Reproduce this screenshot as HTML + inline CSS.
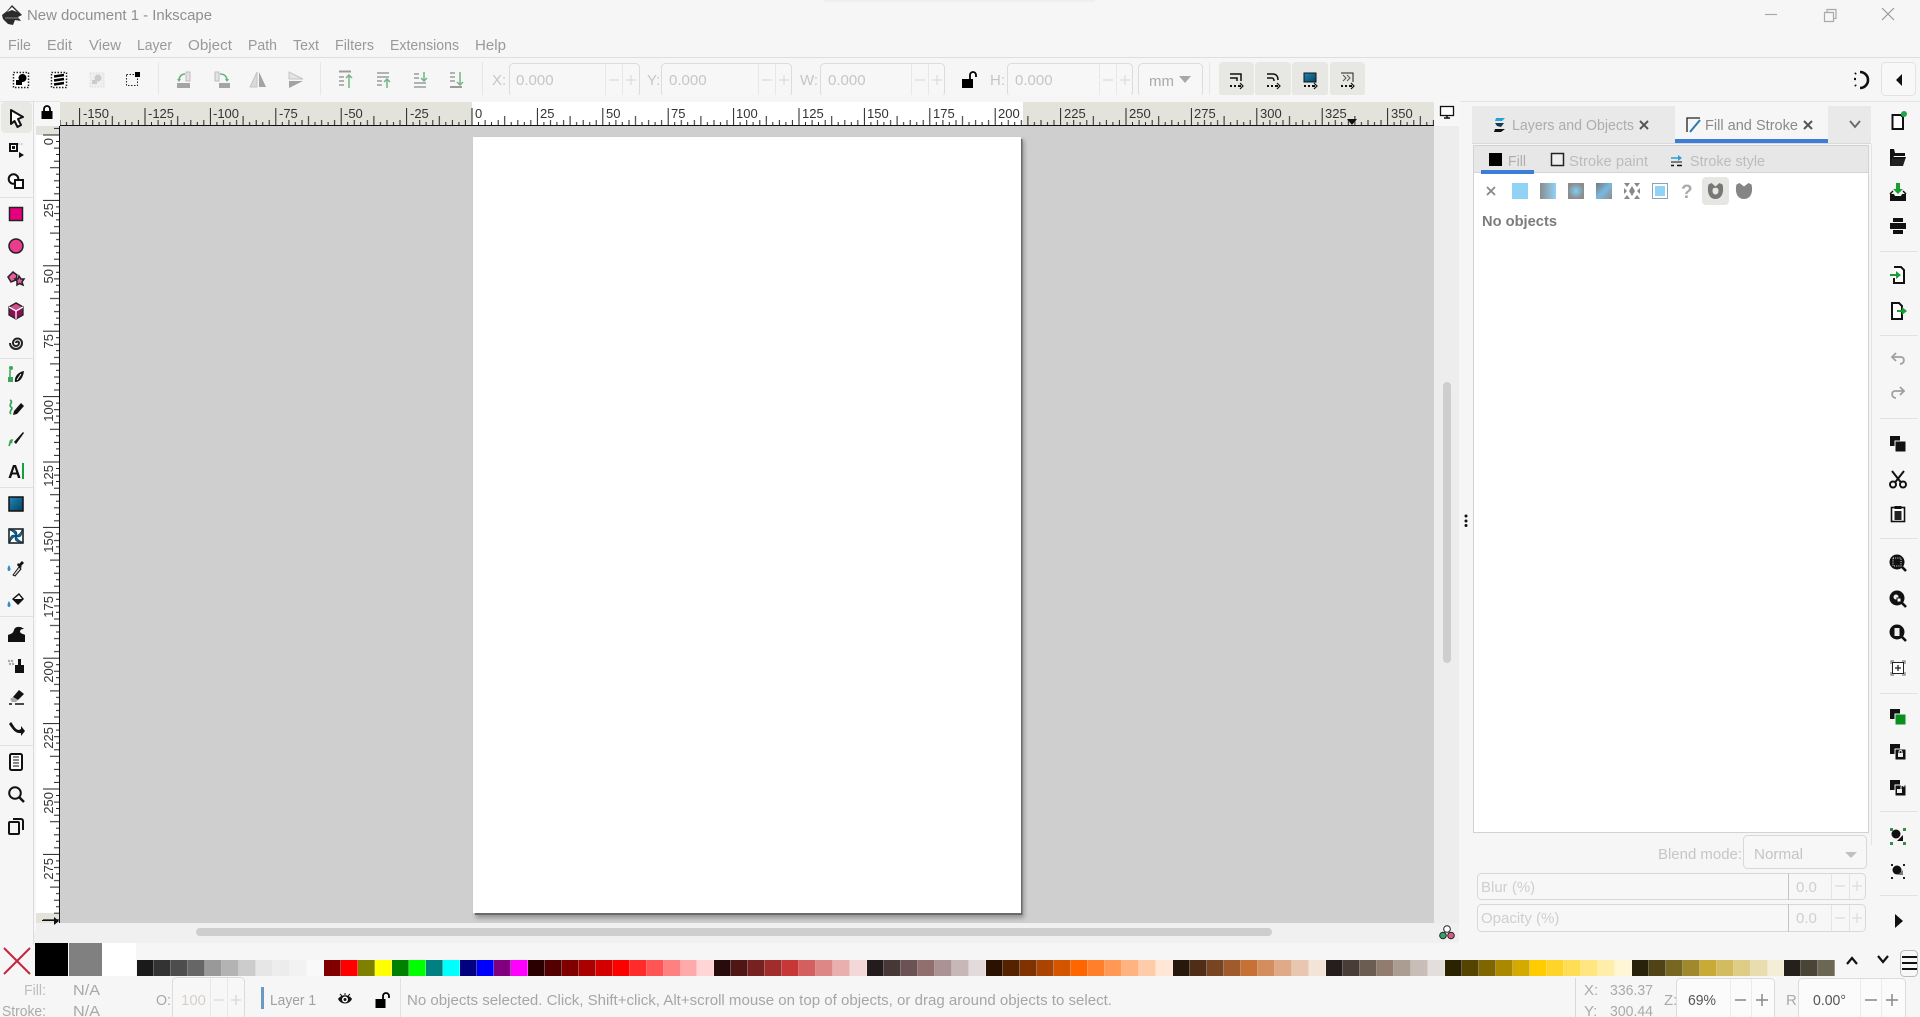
<!DOCTYPE html>
<html><head><meta charset="utf-8"><title>New document 1 - Inkscape</title>
<style>
html,body{margin:0;padding:0;background:#f6f6f6;width:1920px;height:1017px;overflow:hidden}
#r{position:relative;width:1920px;height:1017px;overflow:hidden}
svg{position:absolute;left:0;top:0}
text{font-family:"Liberation Sans",sans-serif}
#p{position:absolute;left:137px;top:960px;width:1699px;height:16px;display:flex}
#p i{flex:1;box-sizing:border-box;border-right:1px solid rgba(255,255,255,.3);display:block}
</style></head><body><div id="r">
<svg width="1920" height="1017" viewBox="0 0 1920 1017" xmlns="http://www.w3.org/2000/svg">
<defs>
<pattern id="th" x="13.7" y="96" width="65.4" height="30" patternUnits="userSpaceOnUse">
<path d="M.5 12V30M7 26V30M13.6 24V30M20 26V30M26.7 24V30M33.2 20V30M39.7 26V30M46.3 24V30M52.8 26V30M59.3 24V30" stroke="#222" stroke-width="1" fill="none"/>
</pattern>
<pattern id="tv" x="30" y="3.7" width="30" height="65.4" patternUnits="userSpaceOnUse">
<path d="M13 .5H30M26 7H30M24 13.6H30M26 20H30M24 26.7H30M20 33.2H30M26 39.7H30M24 46.3H30M26 52.8H30M24 59.3H30" stroke="#222" stroke-width="1" fill="none"/>
</pattern>
<linearGradient id="g1" x1="0" x2="1"><stop offset="0" stop-color="#8c8c8c"/><stop offset="1" stop-color="#8fd3f7"/></linearGradient>
<radialGradient id="g2"><stop offset="0" stop-color="#7fd0f7"/><stop offset="1" stop-color="#8c8c8c"/></radialGradient>
<linearGradient id="g3" x1="1" y1="1" x2="0" y2="0"><stop offset="0" stop-color="#8c8c8c"/><stop offset=".5" stop-color="#79b9e0"/><stop offset="1" stop-color="#777"/></linearGradient>
<linearGradient id="g4" x1="0" x2="1" y1="0" y2="1"><stop offset="0" stop-color="#1b8ab8"/><stop offset="1" stop-color="#0b3f60"/></linearGradient>
<filter id="bl" x="-5%" y="-5%" width="110%" height="110%"><feGaussianBlur stdDeviation="2.500"/></filter>
</defs>

<!-- base -->
<rect width="1920" height="1017" fill="#f6f6f6"/>
<rect x="824" y="0" width="271" height="2" fill="#efefef"/>
<rect x="0" y="57" width="1920" height="1" fill="#dedede"/>
<rect x="0" y="101" width="1920" height="1" fill="#e4e4e4"/>

<!-- title bar -->
<g transform="translate(12,15)">
<path d="M0-10 6-4 10 0 6 2 9 6 3 5 1 10-4 9-9 4-10 0-5-4Z" fill="#2b2b2b"/>
<path d="M0-8-5-3 0-5 5-3Z" fill="#fff"/><path d="M-7 3H7" stroke="#888" stroke-width="1"/>
</g>
<text x="27" y="20" font-size="15" fill="#8f8f8f" textLength="185" lengthAdjust="spacingAndGlyphs">New document 1 - Inkscape</text>
<path d="M1765 14.500H1777" stroke="#aaa" stroke-width="1.200"/>
<path d="M1824.500 12.500h9v9h-9zM1827 12V9.500h9v9h-2.500" fill="none" stroke="#aaa" stroke-width="1.200"/>
<path d="M1882 8 1894 20M1894 8 1882 20" stroke="#999" stroke-width="1.200"/>

<!-- menu -->
<g font-size="15" fill="#999">
<text x="8" y="50" textLength="23" lengthAdjust="spacingAndGlyphs">File</text>
<text x="47" y="50" textLength="25" lengthAdjust="spacingAndGlyphs">Edit</text>
<text x="89" y="50" textLength="32" lengthAdjust="spacingAndGlyphs">View</text>
<text x="137" y="50" textLength="35" lengthAdjust="spacingAndGlyphs">Layer</text>
<text x="188" y="50" textLength="44" lengthAdjust="spacingAndGlyphs">Object</text>
<text x="248" y="50" textLength="29" lengthAdjust="spacingAndGlyphs">Path</text>
<text x="293" y="50" textLength="26" lengthAdjust="spacingAndGlyphs">Text</text>
<text x="335" y="50" textLength="39" lengthAdjust="spacingAndGlyphs">Filters</text>
<text x="390" y="50" textLength="69" lengthAdjust="spacingAndGlyphs">Extensions</text>
<text x="475" y="50" textLength="31" lengthAdjust="spacingAndGlyphs">Help</text>
</g>

<!-- toolbar separators -->
<path d="M158.500 62V98M320.500 62V98M482.500 62V98M1209.500 62V98" stroke="#e6e6e6"/>

<!-- toolbar group 1 -->
<g transform="translate(21,80)"><rect x="-7.500" y="-7.500" width="15" height="15" fill="#fff" stroke="#222" stroke-width="1.500" stroke-dasharray="1.500 1.500"/><circle cx="1.500" cy="-2" r="4" fill="#000"/><rect x="-5" y="0" width="6" height="5" fill="#000"/></g>
<g transform="translate(59,80)"><rect x="-7.500" y="-7.500" width="15" height="15" fill="#fff" stroke="#222" stroke-width="1.500" stroke-dasharray="1.500 1.500"/><path d="M-5-3.500 5-5M-5 0.500 5-1M-5 4.500 5 3" stroke="#000" stroke-width="2.600"/></g>
<g transform="translate(97,80)" opacity=".45"><rect x="-7" y="-7" width="14" height="14" fill="#e8e8e8" stroke="#bbb" stroke-dasharray="1.500 1.500"/><circle cx="1" cy="-2" r="3.500" fill="#999"/><rect x="-5" y="0" width="5" height="4" fill="#999"/></g>
<g transform="translate(133,80)"><rect x="-6.500" y="-5.500" width="11" height="11" fill="none" stroke="#222" stroke-dasharray="1.500 1.500"/><rect x="2" y="-8" width="5" height="5" fill="#000"/></g>
<!-- group 2 -->
<g transform="translate(184,80)" opacity=".75"><rect x="-7" y="3" width="13" height="5" fill="#8a8a8a"/><rect x="2" y="-8" width="4" height="9" fill="#ddd" stroke="#aaa"/><path d="M-5 1C-5-4-2-6 1-6" fill="none" stroke="#3a9a54" stroke-width="1.600"/><path d="M-7-1h4l-2 3z" fill="#3a9a54"/></g>
<g transform="translate(222,80)" opacity=".75"><rect x="-3" y="3" width="11" height="5" fill="#8a8a8a"/><rect x="-7" y="-8" width="4" height="9" fill="#ddd" stroke="#aaa"/><path d="M-2-6C2-6 5-4 5 1" fill="none" stroke="#3a9a54" stroke-width="1.600"/><path d="M3-1h4l-2 3z" fill="#3a9a54"/></g>
<g transform="translate(258,80)" opacity=".65"><path d="M-1-8V7L-8 7Z" fill="#ccc" stroke="#aaa"/><path d="M1-8V7L8 7Z" fill="#777"/></g>
<g transform="translate(296,80)" opacity=".65"><path d="M-7 1H7L-7 8Z" fill="#777"/><path d="M-7-1H7L-7-8Z" fill="#ddd" stroke="#aaa"/></g>
<!-- group 3 -->
<g transform="translate(345,80)" opacity=".7" fill="none" stroke="#777" stroke-width="1.500"><path d="M-6-8.500H6" stroke-width="2"/><path d="M-6-3H-1M-6 1H-1M-6 5H-1"/><path d="M4 8V-4" stroke="#3a9a54"/><path d="M1-2 4-5 7-2" stroke="#3a9a54"/></g>
<g transform="translate(383,80)" opacity=".7" fill="none" stroke="#777" stroke-width="1.500"><path d="M-6-7H6M-6-3H6" /><path d="M-6 1H-1M-6 5H-1"/><path d="M4 8V0" stroke="#3a9a54"/><path d="M1 2 4-1 7 2" stroke="#3a9a54"/></g>
<g transform="translate(420,80)" opacity=".7" fill="none" stroke="#777" stroke-width="1.500"><path d="M-6-6H-1M-6-2H-1M-6 3H6M-6 7H6"/><path d="M4-8V0" stroke="#3a9a54"/><path d="M1-2 4 1 7-2" stroke="#3a9a54"/></g>
<g transform="translate(456,80)" opacity=".7" fill="none" stroke="#777" stroke-width="1.500"><path d="M-6-7H-1M-6-3H-1M-6 1H-1"/><path d="M-6 7H6" stroke-width="2"/><path d="M4-8V4" stroke="#3a9a54"/><path d="M1 2 4 5 7 2" stroke="#3a9a54"/></g>

<!-- coordinate inputs -->
<g fill="#f7f7f7" stroke="#dcdcdc">
<rect x="509.500" y="63.500" width="130" height="33" rx="4"/>
<rect x="661.500" y="63.500" width="130" height="33" rx="4"/>
<rect x="820.500" y="63.500" width="124" height="33" rx="4"/>
<rect x="1007.500" y="63.500" width="125" height="33" rx="4"/>
<rect x="1138.500" y="63.500" width="64" height="33" rx="4"/>
</g>
<path d="M605.500 64V96M622.500 64V96M758.500 64V96M775.500 64V96M911.500 64V96M928.500 64V96M1099.500 64V96M1116.500 64V96" stroke="#e8e8e8"/>
<g font-size="15" fill="#c6c6c6">
<text x="492" y="85">X:</text><text x="516" y="85">0.000</text>
<text x="647" y="85">Y:</text><text x="669" y="85">0.000</text>
<text x="800" y="85">W:</text><text x="828" y="85">0.000</text>
<text x="990" y="85">H:</text><text x="1015" y="85">0.000</text>
</g>
<path d="M609 80H619M626 80H636M631 75V85M762 80H772M779 80H789M784 75V85M915 80H925M932 80H942M937 75V85M1103 80H1113M1120 80H1130M1125 75V85" stroke="#dcdcdc" stroke-width="1.300"/>
<text x="1149" y="86" font-size="15" fill="#aaa">mm</text>
<path d="M1179 76H1191L1185 83Z" fill="#a8a8a8"/>
<!-- unlock -->
<g transform="translate(969,80)"><rect x="-7" y="-1" width="11" height="9" fill="#000"/><path d="M1-1V-5A3 3 0 0 1 7-5V-3" fill="none" stroke="#000" stroke-width="1.800"/></g>

<!-- snap buttons -->
<g fill="#e7e7e3">
<rect x="1219" y="62" width="35" height="34" rx="4"/><rect x="1255" y="62" width="36" height="34" rx="4"/>
<rect x="1292" y="62" width="36" height="34" rx="4"/><rect x="1330" y="62" width="35" height="34" rx="4"/>
</g>
<g transform="translate(1236,80)" fill="none" stroke="#111" stroke-width="1.500"><path d="M-6-6H5V1M-6-2H1V1"/><path d="M-6 6H-4M-2 6H0M2 6H5" stroke-width="2"/><path d="M4 3 7 6 4 9" stroke-width="1.200"/></g>
<g transform="translate(1273,80)" fill="none" stroke="#111" stroke-width="1.500"><path d="M-6-6H0C3-6 5-4 5 0M-6-2H-1C0-2 1-1 1 1"/><path d="M-6 6H-4M-2 6H0M2 6H5" stroke-width="2"/><path d="M4 3 7 6 4 9" stroke-width="1.200"/></g>
<g transform="translate(1310,80)"><rect x="-6" y="-7" width="12" height="9" fill="url(#g4)" stroke="#111"/><path d="M-6 6H-4M-2 6H0M2 6H5" stroke="#111" stroke-width="2" fill="none"/><path d="M4 3 7 6 4 9" stroke="#111" fill="none" stroke-width="1.200"/></g>
<g transform="translate(1347,80)"><path d="M-6-7H6V2" fill="none" stroke="#222"/><path d="M-4-5-1-2-4 1M0-5 3-2 0 1" fill="none" stroke="#555"/><path d="M-6 6H-4M-2 6H0M2 6H5" stroke="#111" stroke-width="2" fill="none"/><path d="M4 3 7 6 4 9" stroke="#111" fill="none" stroke-width="1.200"/></g>
<!-- right top -->
<g transform="translate(1861,80)" fill="none" stroke="#111" stroke-width="2.600"><path d="M-1-8A8 8 0 0 1-1 8"/><path d="M-6-6-5-7M-7-1-5-1M-6 5-5 6" stroke-width="2.200"/></g>
<rect x="1881.500" y="62.500" width="34" height="33" rx="4" fill="#f8f8f8" stroke="#e2e2e2"/>
<path d="M1902 74V86L1896 80Z" fill="#111"/>

<!-- canvas -->
<rect x="60" y="126" width="1374" height="797" fill="#cfcfcf"/>
<rect x="476" y="140" width="548" height="778" fill="#777" filter="url(#bl)" opacity=".7"/>
<rect x="475" y="139" width="547.500" height="776" fill="#6a6a6a"/>
<rect x="473" y="137" width="548" height="776" fill="#fff"/>
<rect x="1434" y="102" width="25" height="841" fill="#ededed"/>
<rect x="1443" y="382" width="8" height="281" rx="4" fill="#cecece"/>
<rect x="34" y="923" width="1425" height="20" fill="#f0f0f0"/>
<rect x="196" y="928" width="1076" height="8" rx="4" fill="#cecece"/>
<g fill="#111"><circle cx="1466" cy="516" r="1.500"/><circle cx="1466" cy="521" r="1.500"/><circle cx="1466" cy="525.500" r="1.500"/></g>
<!-- cms icon -->
<g transform="translate(1447,933)" stroke="#222"><circle cx="0" cy="-4" r="3.300" fill="#fff"/><circle cx="-4" cy="2.500" r="3.300" fill="#3aa06a"/><circle cx="4" cy="2.500" r="3.300" fill="#d85a8c"/></g>

<!-- top ruler -->
<rect x="60" y="102" width="1374" height="24" fill="#e3e3dc"/>
<rect x="472" y="102" width="551" height="24" fill="#fff"/>
<rect x="60" y="96" width="1374" height="30" fill="url(#th)"/>
<rect x="60" y="125" width="1374" height="1" fill="#111"/>
<rect x="60" y="95" width="1400" height="7" fill="#f6f6f6"/>
<g font-size="13" fill="#333">
<text x="83" y="118">-150</text><text x="148" y="118">-125</text><text x="213" y="118">-100</text><text x="279" y="118">-75</text><text x="344" y="118">-50</text><text x="410" y="118">-25</text>
<text x="475" y="118">0</text><text x="540" y="118">25</text><text x="606" y="118">50</text><text x="671" y="118">75</text><text x="736" y="118">100</text><text x="802" y="118">125</text><text x="867" y="118">150</text><text x="933" y="118">175</text><text x="998" y="118">200</text><text x="1064" y="118">225</text><text x="1129" y="118">250</text><text x="1194" y="118">275</text><text x="1260" y="118">300</text><text x="1325" y="118">325</text><text x="1391" y="118">350</text>
</g>
<path d="M1347 119H1357L1352 125Z" fill="#111"/>

<!-- left ruler -->
<rect x="36" y="126" width="24" height="797" fill="#e3e3dc"/>
<rect x="36" y="135" width="24" height="778" fill="#fff"/>
<rect x="30" y="126" width="30" height="797" fill="url(#tv)"/>
<rect x="30" y="102" width="6" height="830" fill="#f6f6f6"/>
<rect x="59" y="126" width="1" height="797" fill="#111"/>
<g font-size="13" fill="#333" text-anchor="end">
<text transform="translate(53,138) rotate(-90)">0</text>
<text transform="translate(53,203) rotate(-90)">25</text>
<text transform="translate(53,269) rotate(-90)">50</text>
<text transform="translate(53,334) rotate(-90)">75</text>
<text transform="translate(53,400) rotate(-90)">100</text>
<text transform="translate(53,465) rotate(-90)">125</text>
<text transform="translate(53,531) rotate(-90)">150</text>
<text transform="translate(53,596) rotate(-90)">175</text>
<text transform="translate(53,661) rotate(-90)">200</text>
<text transform="translate(53,727) rotate(-90)">225</text>
<text transform="translate(53,792) rotate(-90)">250</text>
<text transform="translate(53,858) rotate(-90)">275</text>
</g>
<path d="M54 917V925L59 921Z" fill="#111"/>
<rect x="42" y="920" width="14" height="1" fill="#111"/>
<!-- ruler corners -->
<rect x="36" y="102" width="24" height="24" fill="#f7f7f7"/>
<g transform="translate(47,113)"><rect x="-5.500" y="-2" width="11" height="8" fill="#000"/><path d="M-3-2V-4A3 3 0 0 1 3-4V-2" fill="none" stroke="#000" stroke-width="1.800"/></g>
<rect x="1434" y="102" width="25" height="24" fill="#f7f7f7"/>
<g transform="translate(1447,112)"><rect x="-6.500" y="-5.500" width="13" height="9" fill="#fff" stroke="#111" stroke-width="1.300"/><path d="M-3 6H3M0 3V6" stroke="#111" stroke-width="1.500"/></g>

<!-- left toolbar -->
<path d="M33.500 101V945" stroke="#dcdcdc"/>
<path d="M0 197.500H33M0 358.500H33M0 487.500H33M0 616.500H33M0 745.500H33" stroke="#e2e2e2"/>
<rect x="1" y="102" width="31" height="31" rx="4" fill="#e8e8e4"/>
<path d="M11 110 23 117 18 119 21 125 17.500 127 14.500 121 11 124Z" fill="#fff" stroke="#111" stroke-width="2" stroke-linejoin="round"/>
<g transform="translate(16,151)"><rect x="-6" y="-7" width="7" height="7" fill="#fff" stroke="#111" stroke-width="2"/><rect x="-4" y="-5" width="3" height="3" fill="#111"/><path d="M2-7H7" stroke="#999" stroke-dasharray="1.500 1.500"/><path d="M3 1 8 4 3 7Z" fill="#111"/></g>
<g transform="translate(16,181)" stroke="#111" stroke-width="2"><circle cx="-2.500" cy="-2" r="4.800" fill="#fff"/><rect x="-1" y="-1" width="8" height="8" fill="#fff"/></g>
<rect x="9.500" y="207.500" width="13" height="13" fill="#e6007e" stroke="#222" stroke-width="1.500"/>
<circle cx="16" cy="246" r="7" fill="#ea3d8b" stroke="#222" stroke-width="1.500"/>
<g transform="translate(16,278)" stroke="#222" stroke-width="1.500" fill="#e85aa0"><path d="M-3-6 1-3 0 2-5 4-8-1Z"/><path d="M3-2 5 1 8 1 6 4 7 7 3.500 5.500 1 7 1 3-1 1 2 1Z"/></g>
<g transform="translate(16,311)" stroke="#222" stroke-width="1.300"><path d="M0-8 7-4V4L0 8-7 4V-4Z" fill="#8a0f55"/><path d="M0-8 7-4 0 0-7-4Z" fill="#d64c93"/><path d="M0 0V8" stroke="#fff"/><path d="M0 0 7-4M0 0-7-4" stroke="#fff"/></g>
<path d="M16 343A1.500 1.500 0 0 1 19 343A3 3 0 0 1 13 343A4.500 4.500 0 0 1 22 343A6 6 0 0 1 10 343" fill="none" stroke="#222" stroke-width="2"/>
<g transform="translate(16,375)"><path d="M-6-5V6" stroke="#3aa65a" stroke-width="1.500"/><circle cx="-5" cy="-7" r="2" fill="#3aa65a"/><rect x="-8" y="2" width="5" height="5" fill="#3aa65a"/><path d="M-1 7C-2 2 2-3 8-4 7 3 4 7-1 7Z" fill="#111"/><path d="M1 5 5-1" stroke="#fff"/></g>
<g transform="translate(16,407)"><path d="M-6-7C-2-5-8-2-5 0-2 2-8 4-5 7" fill="none" stroke="#3aa65a" stroke-width="1.800"/><path d="M-2 4 5-4 8-1 1 7-3 8Z" fill="#111"/></g>
<g transform="translate(16,439)"><path d="M-7 7C-5 3-7 1-3 1" fill="none" stroke="#3aa65a" stroke-width="1.800"/><path d="M-2 3 7-7 8-6 0 5Z" fill="#111"/><circle cx="-5" cy="3" r="1.500" fill="#3aa65a"/></g>
<text x="8" y="478" font-size="18" font-weight="bold" fill="#111">A</text><rect x="22" y="463" width="2" height="16" fill="#14a03c"/>
<rect x="9" y="497" width="14" height="14" fill="url(#g4)" stroke="#111" stroke-width="1.500"/>
<g transform="translate(16,536)"><rect x="-7" y="-7" width="14" height="14" fill="#fff" stroke="#111" stroke-width="1.500"/><path d="M0 0C-1-3-3-5-6-6 0-6 2-4 0 0ZM0 0C3-1 5-3 6-6 6 0 4 2 0 0ZM0 0C1 3 3 5 6 6 0 6-2 4 0 0ZM0 0C-3 1-5 3-6 6-6 0-4-2 0 0Z" fill="#136c96" stroke="#0b4f70"/></g>
<g transform="translate(16,568)"><path d="M-7-3C-9 0-9 3-7 3-5 3-5 0-7-3Z" fill="#2d8dd0"/><path d="M-3 7 3-1 5 1-1 8Z" fill="#ddd" stroke="#111"/><path d="M3-4 6-7 8-5 5-2 6-1 4 0 1-3 2-5Z" fill="#111"/></g>
<g transform="translate(16,600)"><path d="M-7 1C-9 4-9 7-7 7-5 7-5 4-7 1Z" fill="#2d8dd0"/><path d="M-4-1 3-7 8-1 2 5Z" fill="#111"/><path d="M-2-1 3-5 6-1Z" fill="#fff"/></g>
<path d="M8 642V635C10 634 13 634 14 630 15 626 21 626 24 629 21 629 20 630 20 632 21 634 24 634 25 635V642Z" fill="#111"/>
<g transform="translate(16,666)" fill="#111"><rect x="-1" y="-1" width="9" height="8"/><rect x="2" y="-4" width="3" height="3"/><path d="M2-7H5V-4H2Z"/><g fill="#aaa"><circle cx="-7" cy="-5" r="1.200"/><circle cx="-4" cy="-5" r="1.200"/><circle cx="-6" cy="-2" r="1.200"/><circle cx="-3" cy="-2" r="1.200"/></g></g>
<g transform="translate(16,696)"><path d="M-3 1 3-6 8-2 2 4Z" fill="#111"/><path d="M-3 1 2 4 0 6H-4L-6 3Z" fill="#aaa"/><path d="M-7 8H-4M-1 8H8" stroke="#111" stroke-width="1.600"/></g>
<path d="M9 724 11 722C13 724 15 730 19 730L21 729 21 726 25 731 21 736 21 733C15 734 12 728 9 724Z" fill="#111"/>
<g transform="translate(16,762)"><rect x="-6" y="-8" width="12" height="16" rx="1.500" fill="#fff" stroke="#111" stroke-width="2"/><path d="M-3-5H3M-3-2H3M-3 1H3M-3 4H3" stroke="#111"/></g>
<g transform="translate(16,794)" fill="none" stroke="#111"><circle cx="-1" cy="-1" r="5.800" stroke-width="2"/><path d="M3.500 3.500 8 8" stroke-width="2.500"/></g>
<g transform="translate(16,826)" fill="none" stroke="#111" stroke-width="2"><rect x="-7" y="-4" width="10" height="12" rx="1"/><path d="M-3-7H5A2 2 0 0 1 7-5V4"/></g>

<!-- panel tabs -->
<rect x="1472" y="106" width="399" height="37" fill="#e9e9e9"/>
<rect x="1675" y="106" width="153" height="33" fill="#f6f6f6"/>
<rect x="1675" y="139" width="153" height="4" fill="#3b7dd8"/>
<rect x="1472" y="143" width="399" height="1" fill="#d9d9d9"/>
<g transform="translate(1500,125)"><path d="M-4-7 5-7 2-4-5-4Z" fill="#2b9fd8"/><path d="M-5-2H4L1 2-3 1Z" fill="#16384d"/><path d="M-5 4H5L1 7H-6Z" fill="#111"/></g>
<text x="1512" y="130" font-size="15" fill="#adadad" textLength="122" lengthAdjust="spacingAndGlyphs">Layers and Objects</text>
<path d="M1640 121 1648 129M1648 121 1640 129" stroke="#555" stroke-width="2"/>
<g transform="translate(1693,125)"><path d="M-6 7V-7H7" fill="none" stroke="#222" stroke-width="1.300"/><path d="M-3 7 7-5" stroke="#2a7ab0" stroke-width="2"/></g>
<text x="1705" y="130" font-size="15" fill="#8a8a8a" textLength="93" lengthAdjust="spacingAndGlyphs">Fill and Stroke</text>
<path d="M1804 121 1812 129M1812 121 1804 129" stroke="#555" stroke-width="2"/>
<path d="M1850 121 1855 127 1860 121" fill="none" stroke="#666" stroke-width="1.800"/>

<!-- panel body -->
<rect x="1473.500" y="145.500" width="395" height="687" fill="#fff" stroke="#d2d2d2"/>
<rect x="1474" y="146" width="394" height="26" fill="#e7e7e7"/>
<rect x="1474" y="172" width="394" height="1" fill="#d4d4d4"/>
<rect x="1481" y="170" width="53" height="4" fill="#3b7dd8"/>
<rect x="1489" y="153" width="13" height="13" fill="#000"/>
<text x="1508" y="166" font-size="15" fill="#adadad" textLength="18" lengthAdjust="spacingAndGlyphs">Fill</text>
<rect x="1551.500" y="153.500" width="12" height="12" fill="#eee" stroke="#222" stroke-width="1.500"/>
<text x="1569" y="166" font-size="15" fill="#bcbcbc" textLength="79" lengthAdjust="spacingAndGlyphs">Stroke paint</text>
<g transform="translate(1677,160)"><path d="M-6-2H3" stroke="#2b9fd8" stroke-width="1.500"/><path d="M1-5 5-2 1 1Z" fill="#2b9fd8"/><path d="M-6 2H5" stroke="#111" stroke-width="1"/><path d="M-6 5.500H-3M0 5.500H5" stroke="#111" stroke-width="1.500"/></g>
<text x="1690" y="166" font-size="15" fill="#bcbcbc" textLength="75" lengthAdjust="spacingAndGlyphs">Stroke style</text>

<!-- fill modes -->
<path d="M1487 187 1495 195M1495 187 1487 195" stroke="#888" stroke-width="1.800"/>
<rect x="1512" y="183" width="16" height="16" fill="#8fd3f7"/>
<rect x="1540" y="183" width="16" height="16" fill="url(#g1)"/>
<rect x="1568" y="183" width="16" height="16" fill="url(#g2)"/>
<rect x="1596" y="183" width="16" height="16" fill="url(#g3)"/>
<g fill="#888"><rect x="1624" y="183" width="16" height="16" fill="#fff"/><path d="M1624 183H1630L1627 187ZM1634 183H1640L1637 187ZM1624 199H1630L1627 195ZM1634 199H1640L1637 195ZM1632 186 1635 191 1632 196 1629 191ZM1624 188 1627 191 1624 194ZM1640 188 1637 191 1640 194Z"/></g>
<rect x="1652.500" y="183.500" width="15" height="15" fill="#fff" stroke="#8aa3b5"/><rect x="1655" y="186" width="10" height="10" fill="#8fd3f7"/>
<text x="1681" y="198" font-size="19" font-weight="bold" fill="#aaa">?</text>
<rect x="1702" y="177" width="27" height="28" rx="4" fill="#e6e6e2"/>
<path d="M1715.500 199C1708 199 1707 190 1708.500 184.500L1711.500 183 1715.500 186.500 1719.500 183 1722.500 184.500C1724 190 1723 199 1715.500 199Z" fill="#777"/>
<path d="M1715.500 194.500C1712.500 194.500 1712 191 1713 188.500 1715 187.500 1716 187.500 1718 188.500 1719 191 1718.500 194.500 1715.500 194.500Z" fill="#e6e6e2"/>
<path d="M1744 199C1736 199 1735 190 1736.500 184.500L1739.500 183 1744 186.500 1748.500 183 1751.500 184.500C1753 190 1752 199 1744 199Z" fill="#858585"/>
<text x="1482" y="226" font-size="15" font-weight="bold" fill="#7c7c7c" textLength="75" lengthAdjust="spacingAndGlyphs">No objects</text>

<!-- blend / blur / opacity -->
<rect x="1473" y="833" width="397" height="110" fill="#f6f6f6"/>
<text x="1658" y="859" font-size="15" fill="#c6c6c6" textLength="84" lengthAdjust="spacingAndGlyphs">Blend mode:</text>
<rect x="1743.500" y="835.500" width="123" height="33" rx="4" fill="#f7f7f7" stroke="#d8d8d8"/>
<text x="1754" y="859" font-size="15" fill="#c4c4c4" textLength="49" lengthAdjust="spacingAndGlyphs">Normal</text>
<path d="M1845 852H1857L1851 858Z" fill="#c0c0c0"/>
<rect x="1477.500" y="873.500" width="388" height="26" rx="4" fill="#f7f7f7" stroke="#d8d8d8"/>
<rect x="1477.500" y="904.500" width="388" height="27" rx="4" fill="#f7f7f7" stroke="#d8d8d8"/>
<path d="M1788.500 873V900M1788.500 904V932" stroke="#c4c4c4"/>
<path d="M1831.500 874V899M1849.500 874V899M1831.500 905V931M1849.500 905V931" stroke="#e4e4e4"/>
<g font-size="15" fill="#cfcfcf">
<text x="1481" y="892">Blur (%)</text><text x="1796" y="892">0.0</text>
<text x="1481" y="923">Opacity (%)</text><text x="1796" y="923">0.0</text>
</g>
<path d="M1835 886H1845M1852 886H1862M1857 881V891M1835 918H1845M1852 918H1862M1857 913V923" stroke="#dcdcdc" stroke-width="1.300"/>

<!-- right toolbar -->
<path d="M1871.500 144V845" stroke="#e4e4e4"/>
<path d="M1880 251.500H1918M1880 335.500H1918M1880 418.500H1918M1880 538.500H1918M1880 693.500H1918M1880 811.500H1918M1880 895.500H1918" stroke="#e2e2e2"/>
<g transform="translate(1898,122)"><path d="M-5.500-7H3L5-5V7H-5.500Z" fill="#fff" stroke="#111" stroke-width="2"/><circle cx="6" cy="-8" r="3" fill="#22a84a"/></g>
<g transform="translate(1898,158)"><path d="M-8-9H-4L-3-5H7V-2H-4L-6 2V8H-8Z" fill="#111"/><path d="M-5-1H8L5 8H-8Z" fill="#222"/><path d="M-4-1H8L7 1H-5Z" fill="#111"/></g>
<g transform="translate(1898,192)"><path d="M-2-9H2V-3H5L0 2-5-3H-2Z" fill="#17a031"/><path d="M-8 2H-4L-3 4H3L4 2H8V9H-8Z" fill="#111"/><path d="M-5-1-8 2M5-1 8 2" stroke="#111" fill="none" stroke-width="1.500"/></g>
<g transform="translate(1898,226)" fill="#111"><rect x="-5" y="-8" width="10" height="4"/><rect x="-8" y="-3" width="16" height="6"/><rect x="-5" y="4" width="10" height="4"/></g>
<g transform="translate(1898,275)"><path d="M-4-8H3L6-5V8H-4V3" fill="#fff" stroke="#111" stroke-width="2"/><path d="M-8-1H-2V-4L3 0-2 4V1H-8Z" fill="#17a031"/></g>
<g transform="translate(1898,311)"><path d="M-6-8H1L4-5V8H-6Z" fill="#fff" stroke="#111" stroke-width="2"/><path d="M-1-1H4V-4L9 0 4 4V1H-1Z" fill="#17a031"/></g>
<g transform="translate(1898,360)" fill="none" stroke="#a0a0a0" stroke-width="1.800"><path d="M-5-3H3C7-3 7 4 2 4"/><path d="M-2-7-6-3-2 1"/></g>
<g transform="translate(1898,394)" fill="none" stroke="#a0a0a0" stroke-width="1.800"><path d="M5-3H-3C-7-3-7 4-2 4"/><path d="M2-7 6-3 2 1"/></g>
<g transform="translate(1898,444)" fill="#111"><rect x="-8" y="-8" width="10" height="10"/><rect x="-3" y="-3" width="11" height="11" stroke="#f6f6f6"/></g>
<g transform="translate(1898,479)" fill="none" stroke="#111" stroke-width="2"><circle cx="-5" cy="5.500" r="3"/><circle cx="5" cy="5.500" r="3"/><path d="M-3 3.500 6-8M3 3.500-6-8"/></g>
<g transform="translate(1898,514)"><rect x="-6.500" y="-6.500" width="13" height="14" fill="#fff" stroke="#111" stroke-width="1.600"/><rect x="-3.500" y="-8" width="7" height="3" fill="#111"/><path d="M-3.500-3H3.500V6H-3.500Z" fill="#222"/></g>
<g transform="translate(1898,563)"><circle cx="-1" cy="-1" r="7.500" fill="#111"/><path d="M4 4 8 8" stroke="#111" stroke-width="2.600"/><rect x="-5" y="-5" width="8" height="8" fill="none" stroke="#eee" stroke-dasharray="1 1.200"/></g>
<g transform="translate(1898,599)"><circle cx="-1" cy="-1" r="7.500" fill="#111"/><path d="M4 4 8 8" stroke="#111" stroke-width="2.600"/><circle cx="-2" cy="-2" r="2.500" fill="#eee"/><rect x="-1" y="-1" width="4" height="4" fill="#fff" stroke="#111"/></g>
<g transform="translate(1898,633)"><circle cx="-1" cy="-1" r="7.500" fill="#111"/><path d="M4 4 8 8" stroke="#111" stroke-width="2.600"/><rect x="-3.500" y="-5" width="5" height="8" fill="#eee"/></g>
<g transform="translate(1898,668)"><rect x="-5.500" y="-5.500" width="11" height="11" fill="#fff" stroke="#222"/><path d="M-3 0H3M0-3V3" stroke="#222" stroke-width="1.300"/><path d="M-7-4V-7H-4M4-7H7V-4M7 4V7H4M-4 7H-7V4" fill="none" stroke="#666"/></g>
<g transform="translate(1898,717)"><rect x="-8" y="-8" width="10" height="10" fill="#111"/><rect x="-3" y="-3" width="11" height="11" fill="#0a8f1f" stroke="#f6f6f6"/></g>
<g transform="translate(1898,752)"><rect x="-8" y="-8" width="10" height="10" fill="#111"/><rect x="-3" y="-3" width="11" height="11" fill="#111" stroke="#f6f6f6"/><rect x="0" y="1" width="5" height="4" fill="#eee"/><path d="M1 1V0A1.500 1.500 0 0 1 4 0V1" stroke="#eee" fill="none"/></g>
<g transform="translate(1898,788)"><rect x="-8" y="-8" width="10" height="10" fill="#111"/><rect x="-3" y="-3" width="11" height="11" fill="#111" stroke="#f6f6f6"/><rect x="-1" y="1" width="5" height="4" fill="#eee"/><path d="M3 1V-1A1.500 1.500 0 0 1 6-1" stroke="#eee" fill="none"/></g>
<g transform="translate(1898,836)"><g fill="#3a8a4a"><rect x="-8" y="-8" width="3" height="3"/><rect x="5" y="-8" width="3" height="3"/><rect x="-8" y="6" width="3" height="3"/><rect x="5" y="6" width="3" height="3"/></g><circle cx="-2" cy="-2" r="4.500" fill="#111"/><path d="M-1 5 5-1 5 5Z" fill="#111"/></g>
<g transform="translate(1898,871)"><g fill="#222"><rect x="-7" y="-7" width="2" height="2"/><rect x="5" y="-7" width="2" height="2"/><rect x="-7" y="6" width="2" height="2"/><rect x="5" y="6" width="2" height="2"/></g><circle cx="-1" cy="-1" r="4.500" fill="#111"/><path d="M0 4 5-1 5 4Z" fill="#777"/></g>
<path d="M1895 914V928L1903 921Z" fill="#111"/>

<!-- palette -->
<path d="M4 948 30 974M30 948 4 974" stroke="#c4263f" stroke-width="2"/>
<rect x="35" y="943" width="33" height="33" fill="#000"/>
<rect x="69" y="943" width="33" height="33" fill="#808080"/>
<rect x="102" y="943" width="34" height="33" fill="#fff"/>
<path d="M1847 964 1852 958 1857 964" fill="none" stroke="#111" stroke-width="2.200"/>
<path d="M1878 956 1883 962 1888 956" fill="none" stroke="#111" stroke-width="2.200"/>
<rect x="1900.500" y="950.500" width="17" height="26" rx="4" fill="#f8f8f8" stroke="#bbb"/>
<path d="M1902 957H1917M1902 963H1917M1902 969H1917" stroke="#111" stroke-width="2"/>

<!-- status bar -->
<g font-size="15" fill="#a8a8a8">
<text x="24" y="995" fill="#bdbdbd" textLength="22" lengthAdjust="spacingAndGlyphs">Fill:</text>
<text x="2" y="1016" fill="#aaa" textLength="44" lengthAdjust="spacingAndGlyphs">Stroke:</text>
<text x="73" y="995" textLength="27" lengthAdjust="spacingAndGlyphs">N/A</text>
<text x="73" y="1016" textLength="27" lengthAdjust="spacingAndGlyphs">N/A</text>
<text x="156" y="1005" textLength="15" lengthAdjust="spacingAndGlyphs">O:</text>
</g>
<rect x="172.500" y="977.500" width="72" height="50" rx="4" fill="#f7f7f7" stroke="#dcdcdc"/>
<path d="M210.500 978V1017M227.500 978V1017" stroke="#e8e8e8"/>
<text x="181" y="1005" font-size="15" fill="#d8d0c8">100</text>
<path d="M214 1000H224M231 1000H241M236 995V1005" stroke="#d8d8d8" stroke-width="1.300"/>
<rect x="261" y="987" width="3" height="22" fill="#6a9ac4"/>
<text x="270" y="1005" font-size="15" fill="#a0a0a0" textLength="46" lengthAdjust="spacingAndGlyphs">Layer 1</text>
<g transform="translate(345,1000)"><path d="M-7-1C-4-6 4-6 7-1 4 5-4 5-7-1Z" fill="#111"/><circle cy="-.5" r="3" fill="#fff"/><circle cy="-.5" r="1.500" fill="#111"/><path d="M-5-6-3-4M5-6 3-4M0-7V-5" stroke="#111"/></g>
<g transform="translate(382,1000)"><rect x="-6.500" y="-1" width="10" height="9" fill="#000"/><path d="M1-1V-4A3 3 0 0 1 7-4V-2" fill="none" stroke="#000" stroke-width="1.800"/></g>
<path d="M400.500 978V1017" stroke="#e2e2e2"/>
<text x="407" y="1005" font-size="15" fill="#a6a6a6" textLength="705" lengthAdjust="spacingAndGlyphs">No objects selected. Click, Shift+click, Alt+scroll mouse on top of objects, or drag around objects to select.</text>

<path d="M1575.500 978V1017" stroke="#d8d8d8"/>
<g font-size="15" fill="#aaa">
<text x="1584" y="995">X:</text><text x="1584" y="1016">Y:</text>
<text x="1610" y="995" textLength="43" lengthAdjust="spacingAndGlyphs">336.37</text>
<text x="1610" y="1016" textLength="43" lengthAdjust="spacingAndGlyphs">300.44</text>
<text x="1664" y="1005">Z:</text><text x="1786" y="1005">R:</text>
</g>
<rect x="1676.500" y="978.500" width="98" height="50" rx="4" fill="#fbfbfb" stroke="#dcdcdc"/>
<rect x="1798.500" y="978.500" width="107" height="50" rx="4" fill="#fbfbfb" stroke="#dcdcdc"/>
<path d="M1730.500 979V1017M1751.500 979V1017M1860.500 979V1017M1881.500 979V1017" stroke="#ececec"/>
<text x="1688" y="1005" font-size="15" fill="#555" textLength="28" lengthAdjust="spacingAndGlyphs">69%</text>
<text x="1813" y="1005" font-size="15" fill="#555" textLength="33" lengthAdjust="spacingAndGlyphs">0.00°</text>
<path d="M1735 1000H1746M1756 1000H1768M1762 994V1006M1865 1000H1877M1886 1000H1898M1892 994V1006" stroke="#888" stroke-width="1.500"/>
</svg>
<div id="p">
<i style="background:#1a1a1a"></i><i style="background:#333"></i><i style="background:#4d4d4d"></i><i style="background:#666"></i><i style="background:#999"></i><i style="background:#b3b3b3"></i><i style="background:#ccc"></i><i style="background:#e6e6e6"></i><i style="background:#ececec"></i><i style="background:#f2f2f2"></i><i style="background:#f9f9f9"></i>
<i style="background:#800000"></i><i style="background:#f00"></i><i style="background:#808000"></i><i style="background:#ff0"></i><i style="background:#008000"></i><i style="background:#0f0"></i><i style="background:#008080"></i><i style="background:#0ff"></i><i style="background:#000080"></i><i style="background:#00f"></i><i style="background:#800080"></i><i style="background:#f0f"></i>
<i style="background:#2b0000"></i><i style="background:#500"></i><i style="background:#800000"></i><i style="background:#a00"></i><i style="background:#d40000"></i><i style="background:#f00"></i><i style="background:#ff2a2a"></i><i style="background:#f55"></i><i style="background:#ff8080"></i><i style="background:#faa"></i><i style="background:#ffd5d5"></i>
<i style="background:#280b0b"></i><i style="background:#501616"></i><i style="background:#782121"></i><i style="background:#a02c2c"></i><i style="background:#c83737"></i><i style="background:#d35f5f"></i><i style="background:#de8787"></i><i style="background:#e9afaf"></i><i style="background:#f4d7d7"></i>
<i style="background:#241c1c"></i><i style="background:#483737"></i><i style="background:#6c5353"></i><i style="background:#916f6f"></i><i style="background:#ac9393"></i><i style="background:#c8b7b7"></i><i style="background:#e3dbdb"></i>
<i style="background:#2b1100"></i><i style="background:#520"></i><i style="background:#803300"></i><i style="background:#a40"></i><i style="background:#d45500"></i><i style="background:#f60"></i><i style="background:#ff7f2a"></i><i style="background:#f95"></i><i style="background:#ffb380"></i><i style="background:#fca"></i><i style="background:#ffe6d5"></i>
<i style="background:#28170b"></i><i style="background:#502d16"></i><i style="background:#784421"></i><i style="background:#a05a2c"></i><i style="background:#c87137"></i><i style="background:#d38d5f"></i><i style="background:#deaa87"></i><i style="background:#e9c6af"></i><i style="background:#f4e3d7"></i>
<i style="background:#241f1c"></i><i style="background:#483e37"></i><i style="background:#6c5d53"></i><i style="background:#917c6f"></i><i style="background:#ac9d93"></i><i style="background:#c8beb7"></i><i style="background:#e3dedb"></i>
<i style="background:#2b2200"></i><i style="background:#540"></i><i style="background:#806600"></i><i style="background:#a80"></i><i style="background:#d4aa00"></i><i style="background:#fc0"></i><i style="background:#ffd42a"></i><i style="background:#fd5"></i><i style="background:#ffe680"></i><i style="background:#fea"></i><i style="background:#fff6d5"></i>
<i style="background:#28220b"></i><i style="background:#504416"></i><i style="background:#786721"></i><i style="background:#a0892c"></i><i style="background:#c8ab37"></i><i style="background:#d3bc5f"></i><i style="background:#decd87"></i><i style="background:#e9ddaf"></i><i style="background:#f4eed7"></i>
<i style="background:#24211c"></i><i style="background:#484537"></i><i style="background:#6c6753"></i>
</div>
</div></body></html>
